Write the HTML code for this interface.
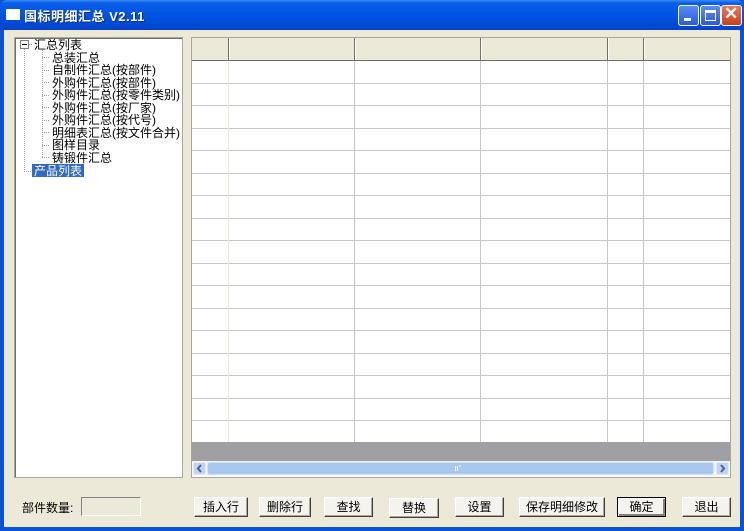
<!DOCTYPE html>
<html><head><meta charset="utf-8"><style>
*{margin:0;padding:0;box-sizing:border-box}
body{width:744px;height:531px;overflow:hidden;background:#0a52d8;font-family:"Liberation Sans","Noto Sans CJK SC","WenQuanYi Zen Hei",sans-serif;font-size:12px;position:relative}
.a{position:absolute}
.title{left:0;top:0;width:744px;height:30px;background:linear-gradient(#3d8cf5 0,#0a5ee8 3px,#0054e3 15px,#0048d0 27px,#0a3fc0 30px);border-radius:7px 7px 0 0}
.client{left:4px;top:30px;width:736px;height:497px;background:#ece9d8}
.btn{position:absolute;top:497px;height:20px;background:#f4f3ee;border:1px solid #fff;border-right-color:#404040;border-bottom-color:#404040;box-shadow:inset -1px -1px 0 #aca899;font-size:12px;text-align:center;line-height:18px;color:#000}
.tree div{position:absolute;white-space:nowrap;font-size:12px;line-height:12px}
.tb{position:absolute;top:5px;width:21px;height:21px;border:1px solid #fff;border-radius:3px;background:linear-gradient(#5a8cf0,#2a5ae0)}
</style></head><body>
<div class="a title"></div>
<div class="a" style="left:6px;top:9px;width:14px;height:11px;background:#fff;border-top:2px solid #fff"></div>
<div class="a" style="left:24px;top:6px;color:#fff;font-weight:bold;font-size:13px;letter-spacing:0.5px;text-shadow:1px 1px #0a2f8c">国标明细汇总 V2.11</div>
<div class="tb" style="left:678px"><div class="a" style="left:5px;top:12px;width:7px;height:3px;background:#fff"></div></div>
<div class="tb" style="left:700px"><div class="a" style="left:4px;top:4px;width:11px;height:11px;border:1px solid #fff;border-top-width:3px"></div></div>
<div class="tb" style="left:721px;background:linear-gradient(#e8775a,#c8401c)"><div class="a" style="left:2px;top:-2px;color:#fff;font-size:17px;font-weight:bold">✕</div></div>
<div class="a client"></div>

<!-- tree -->
<div class="a" style="left:14px;top:37px;width:169px;height:441px;background:#fff;border:1px solid #aca899;box-shadow:inset 1px 1px 0 #716f64"></div>
<svg class="a" style="left:0;top:0" width="200" height="180">
<rect x="20.5" y="40.5" width="8" height="8" fill="#fff" stroke="#808080"/>
<line x1="22" y1="44.5" x2="27" y2="44.5" stroke="#000"/>
<g stroke="#a0a0a0" stroke-dasharray="1 1">
<line x1="24.5" y1="49" x2="24.5" y2="171"/>
<line x1="24" y1="171.5" x2="32" y2="171.5"/>
<line x1="29" y1="44.5" x2="33" y2="44.5"/>
<line x1="42.5" y1="50" x2="42.5" y2="158"/>
<line x1="42" y1="57.5" x2="50" y2="57.5"/><line x1="42" y1="70.5" x2="50" y2="70.5"/>
<line x1="42" y1="82.5" x2="50" y2="82.5"/><line x1="42" y1="95.5" x2="50" y2="95.5"/>
<line x1="42" y1="107.5" x2="50" y2="107.5"/><line x1="42" y1="120.5" x2="50" y2="120.5"/>
<line x1="42" y1="132.5" x2="50" y2="132.5"/><line x1="42" y1="145.5" x2="50" y2="145.5"/>
<line x1="42" y1="157.5" x2="50" y2="157.5"/>
</g></svg>
<div class="tree">
<div style="left:34px;top:39px">汇总列表</div>
<div style="left:52px;top:52px">总装汇总</div>
<div style="left:52px;top:64px">自制件汇总(按部件)</div>
<div style="left:52px;top:77px">外购件汇总(按部件)</div>
<div style="left:52px;top:89px">外购件汇总(按零件类别)</div>
<div style="left:52px;top:102px">外购件汇总(按厂家)</div>
<div style="left:52px;top:114px">外购件汇总(按代号)</div>
<div style="left:52px;top:127px">明细表汇总(按文件合并)</div>
<div style="left:52px;top:139px">图样目录</div>
<div style="left:52px;top:152px">铸锻件汇总</div>
<div style="left:32px;top:164px;background:#316ac5;color:#fff;padding:1px 2px 0">产品列表</div>
</div>

<!-- grid -->
<div class="a" style="left:191px;top:37px;width:540px;height:441px;background:#fff;border:1px solid #aca899"></div>
<svg class="a" style="left:0;top:0" width="744" height="531">
<rect x="192" y="38" width="538" height="22" fill="#ece9d8"/>
<g stroke="#716f64"><line x1="192" y1="60.5" x2="730" y2="60.5"/>
<line x1="228.5" y1="38" x2="228.5" y2="60"/><line x1="354.5" y1="38" x2="354.5" y2="60"/><line x1="480.5" y1="38" x2="480.5" y2="60"/><line x1="607.5" y1="38" x2="607.5" y2="60"/><line x1="643.5" y1="38" x2="643.5" y2="60"/></g>
<g stroke="#fff"><line x1="229.5" y1="38" x2="229.5" y2="60"/><line x1="355.5" y1="38" x2="355.5" y2="60"/><line x1="481.5" y1="38" x2="481.5" y2="60"/><line x1="608.5" y1="38" x2="608.5" y2="60"/><line x1="644.5" y1="38" x2="644.5" y2="60"/></g>
<g stroke="#c8c8c0">
<line x1="354.5" y1="61" x2="354.5" y2="442"/><line x1="480.5" y1="61" x2="480.5" y2="442"/><line x1="607.5" y1="61" x2="607.5" y2="442"/><line x1="643.5" y1="61" x2="643.5" y2="442"/>
<line x1="192" y1="83.5" x2="730" y2="83.5"/><line x1="192" y1="105.5" x2="730" y2="105.5"/><line x1="192" y1="128.5" x2="730" y2="128.5"/><line x1="192" y1="150.5" x2="730" y2="150.5"/><line x1="192" y1="173.5" x2="730" y2="173.5"/><line x1="192" y1="195.5" x2="730" y2="195.5"/><line x1="192" y1="218.5" x2="730" y2="218.5"/><line x1="192" y1="240.5" x2="730" y2="240.5"/><line x1="192" y1="263.5" x2="730" y2="263.5"/><line x1="192" y1="285.5" x2="730" y2="285.5"/><line x1="192" y1="308.5" x2="730" y2="308.5"/><line x1="192" y1="330.5" x2="730" y2="330.5"/><line x1="192" y1="353.5" x2="730" y2="353.5"/><line x1="192" y1="375.5" x2="730" y2="375.5"/><line x1="192" y1="398.5" x2="730" y2="398.5"/><line x1="192" y1="420.5" x2="730" y2="420.5"/>
</g>
<line x1="228.5" y1="61" x2="228.5" y2="442" stroke="#ece9d8"/>
<rect x="192" y="442" width="538" height="19" fill="#a0a0a4"/>
<rect x="192" y="461" width="538" height="15" fill="#eef2fb"/>
<rect x="193" y="462" width="13" height="13" rx="2" fill="#c0d4f6" stroke="#fff"/>
<path d="M201 465 l-3 3.5 l3 3.5" stroke="#4d6185" stroke-width="2" fill="none"/>
<rect x="716" y="462" width="13" height="13" rx="2" fill="#c0d4f6" stroke="#fff"/>
<path d="M721 465 l3 3.5 l-3 3.5" stroke="#4d6185" stroke-width="2" fill="none"/>
<rect x="207.5" y="462.5" width="506" height="12" rx="2" fill="#a9c8f0" stroke="#d4e2f8"/>
<path d="M455.5 466 v5 M457.5 466 v5 M459 466 h2" stroke="#eef4fc"/>
</svg>

<!-- bottom -->
<div class="a" style="left:22px;top:499px">部件数量:</div>
<div class="a" style="left:81px;top:497px;width:60px;height:19px;border:1px solid #808080;border-right-color:#fff;border-bottom-color:#fff;background:#ece9d8"></div>
<div class="btn" style="left:194px;width:54px">插入行</div>
<div class="btn" style="left:259px;width:52px">删除行</div>
<div class="btn" style="left:324px;width:49px">查找</div>
<div class="btn" style="left:389px;width:50px;top:498px">替换</div>
<div class="btn" style="left:455px;width:49px">设置</div>
<div class="btn" style="left:519px;width:86px">保存明细修改</div>
<div class="btn" style="left:617px;width:49px;border:1px solid #000;box-shadow:inset 1px 1px 0 #fff,inset -2px -2px 0 #808080">确定</div>
<div class="btn" style="left:682px;width:49px">退出</div>
</body></html>
